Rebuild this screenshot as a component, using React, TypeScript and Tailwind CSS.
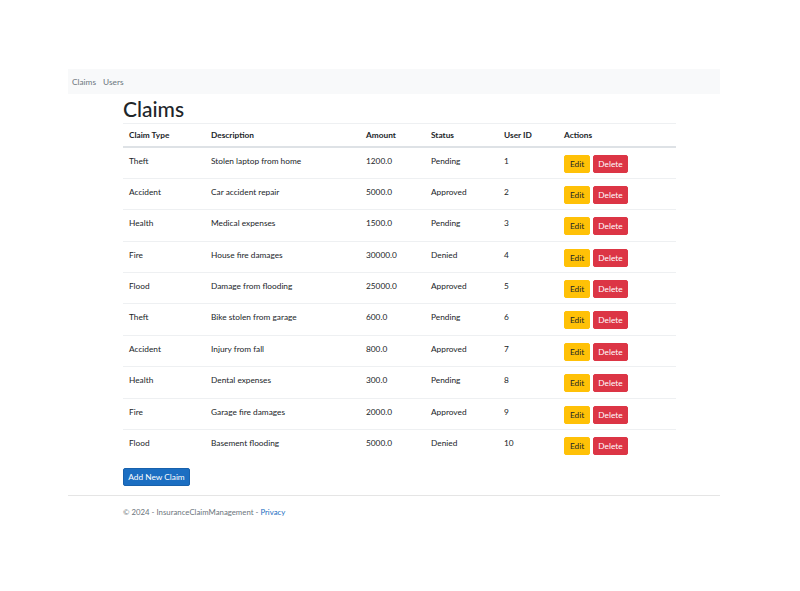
const claims = [
  { type: 'Theft', desc: 'Stolen laptop from home', amount: '1200.0', status: 'Pending', user: 1 },
  { type: 'Accident', desc: 'Car accident repair', amount: '5000.0', status: 'Approved', user: 2 },
  { type: 'Health', desc: 'Medical expenses', amount: '1500.0', status: 'Pending', user: 3 },
  { type: 'Fire', desc: 'House fire damages', amount: '30000.0', status: 'Denied', user: 4 },
  { type: 'Flood', desc: 'Damage from flooding', amount: '25000.0', status: 'Approved', user: 5 },
  { type: 'Theft', desc: 'Bike stolen from garage', amount: '600.0', status: 'Pending', user: 6 },
  { type: 'Accident', desc: 'Injury from fall', amount: '800.0', status: 'Approved', user: 7 },
  { type: 'Health', desc: 'Dental expenses', amount: '300.0', status: 'Pending', user: 8 },
  { type: 'Fire', desc: 'Garage fire damages', amount: '2000.0', status: 'Approved', user: 9 },
  { type: 'Flood', desc: 'Basement flooding', amount: '5000.0', status: 'Denied', user: 10 },
]

export default function App() {
  return (
    <div className="min-h-[591px] w-[800px] bg-white pt-[69px] text-[8.3px] leading-[12px] text-[#212529] font-['Lato',sans-serif]">
      <nav className="ml-[68px] flex h-[25px] w-[652px] items-center gap-[7px] bg-[#f8f9fa] px-[4px] text-[#6c757d]">
        <span>Claims</span>
        <span>Users</span>
      </nav>

      <main className="mx-[123px] w-[553px]">
        <h1 className="mt-[1px] h-[28px] text-[21px] leading-[28px] font-medium">Claims</h1>

        <table className="w-full table-fixed border-collapse text-left">
          <thead>
            <tr className="border-t border-b-2 border-t-[#eef0f2] border-b-[#dee2e6] font-bold">
              <th className="h-[23px] w-[82px] px-[6px]">Claim Type</th>
              <th className="w-[155px] px-[6px]">Description</th>
              <th className="w-[65px] px-[6px]">Amount</th>
              <th className="w-[73px] px-[6px]">Status</th>
              <th className="w-[60px] px-[6px]">User ID</th>
              <th className="px-[6px]">Actions</th>
            </tr>
          </thead>
          <tbody>
            {claims.map((c, i) => (
              <tr key={i} className={i < claims.length - 1 ? 'border-b border-[#eef0f2]' : ''}>
                <td className="px-[6px] pt-[7px] pb-[5.4px] align-top">{c.type}</td>
                <td className="px-[6px] pt-[7px] align-top">{c.desc}</td>
                <td className="px-[6px] pt-[7px] align-top">{c.amount}</td>
                <td className="px-[6px] pt-[7px] align-top">{c.status}</td>
                <td className="px-[6px] pt-[7px] align-top">{c.user}</td>
                <td className="px-[6px] pt-[7px] pb-[5.4px] align-top">
                  <div className="flex gap-[3px]">
                    <button className="h-[18px] w-[26px] rounded-[2px] border border-[#ffc107] bg-[#ffc107] text-[#212529]">Edit</button>
                    <button className="h-[18px] w-[35px] rounded-[2px] border border-[#dc3545] bg-[#dc3545] text-white">Delete</button>
                  </div>
                </td>
              </tr>
            ))}
          </tbody>
        </table>

        <button className="mt-[8px] h-[18px] w-[67px] rounded-[2px] border border-[#1861ac] bg-[#1b6ec2] text-white">Add New Claim</button>
      </main>

      <footer className="ml-[68px] mt-[9px] w-[652px] border-t border-[#e5e5e5] pt-[10px] pl-[55px] text-[7.8px] text-[#6c757d]">
        © 2024 - InsuranceClaimManagement - <span className="text-[#1b6ec2]">Privacy</span>
      </footer>
    </div>
  )
}
